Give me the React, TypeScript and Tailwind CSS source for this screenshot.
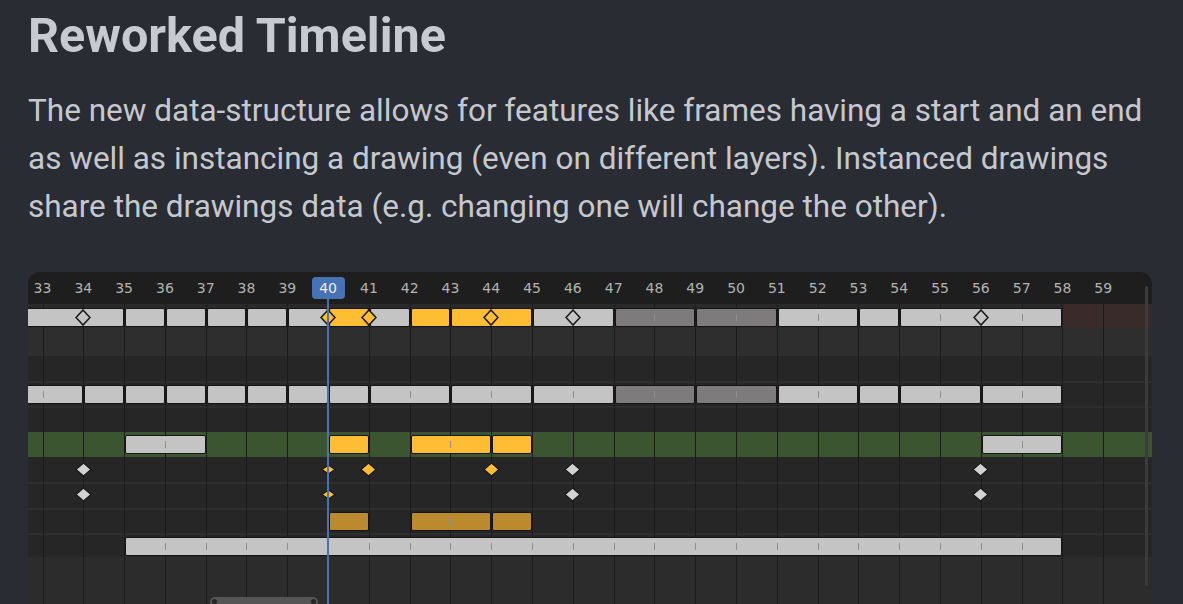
import React from 'react';

// Timeline columns: a 14.5px lead-in up to frame 33, then one 40.8px column per frame.
// Grid line n sits on frame n + 31, so bars and keys are placed by the frame numbers they hold.
const COLS = 'grid grid-cols-[14.5px_repeat(26,40.8px)_1fr]';
const line = (f: number) => f - 31;
const frames = Array.from({ length: 27 }, (_, i) => 33 + i);

type Tone = 'gray' | 'dim' | 'yellow' | 'amber';
type Bar = { a: number; b: number; tone: Tone };
type Key = { f: number; tone: 'gray' | 'yellow'; small?: boolean };

const toneClass: Record<Tone, string> = {
  gray: 'bg-[#c4c4c4]',
  dim: 'bg-[#7d7b7b]',
  yellow: 'bg-[#ffbd33]',
  amber: 'bg-[#bb8a2e]',
};

interface Channel {
  box: string;
  shift?: string;
  bars?: Bar[];
  ticks?: number[];
  outlined?: Key[];
  keys?: Key[];
  redFrom?: number;
}

const g = (a: number, b: number): Bar => ({ a, b, tone: 'gray' });
const y = (a: number, b: number): Bar => ({ a, b, tone: 'yellow' });

const channels: Channel[] = [
  {
    box: 'h-[24px] bg-[#2a2a2a]',
    shift: 'mt-[3px]',
    redFrom: 58,
    bars: [
      g(32, 35), g(35, 36), g(36, 37), g(37, 38), g(38, 39), g(39, 40),
      y(40, 41), g(41, 42), y(42, 43), y(43, 45), g(45, 47),
      { a: 47, b: 49, tone: 'dim' }, { a: 49, b: 51, tone: 'dim' },
      g(51, 53), g(53, 54), g(54, 58),
    ],
    ticks: [48, 50, 52, 55, 57],
    outlined: [
      { f: 34, tone: 'gray' }, { f: 40, tone: 'yellow' }, { f: 41, tone: 'yellow' },
      { f: 44, tone: 'yellow' }, { f: 46, tone: 'gray' }, { f: 56, tone: 'gray' },
    ],
  },
  { box: 'h-[28px] bg-[#2e2e2e]' },
  { box: 'h-[25px] bg-[#262626]' },
  {
    box: 'h-[25px] bg-[#262626] border-t-2 border-[#2f2f2f]',
    bars: [
      g(32, 34), g(34, 35), g(35, 36), g(36, 37), g(37, 38), g(38, 39), g(39, 40), g(40, 41),
      g(41, 43), g(43, 45), g(45, 47),
      { a: 47, b: 49, tone: 'dim' }, { a: 49, b: 51, tone: 'dim' },
      g(51, 53), g(53, 54), g(54, 56), g(56, 58),
    ],
    ticks: [33, 42, 44, 46, 48, 50, 52, 55, 57],
  },
  { box: 'h-[26px] bg-[#262626] border-t-2 border-[#2d2d2d]' },
  {
    box: 'h-[25px] bg-[#3b5531]',
    bars: [g(35, 37), y(40, 41), y(42, 44), y(44, 45), g(56, 58)],
    ticks: [36, 43, 57],
  },
  {
    box: 'h-[25px] bg-[#262626]',
    keys: [
      { f: 34, tone: 'gray' }, { f: 40, tone: 'yellow', small: true }, { f: 41, tone: 'yellow' },
      { f: 44, tone: 'yellow' }, { f: 46, tone: 'gray' }, { f: 56, tone: 'gray' },
    ],
  },
  {
    box: 'h-[26px] bg-[#262626] border-t-2 border-[#2f2f2f]',
    shift: 'mb-[3px]',
    keys: [
      { f: 34, tone: 'gray' }, { f: 40, tone: 'yellow', small: true },
      { f: 46, tone: 'gray' }, { f: 56, tone: 'gray' },
    ],
  },
  {
    box: 'h-[25px] bg-[#262626] border-t-2 border-[#2f2f2f]',
    bars: [
      { a: 40, b: 41, tone: 'amber' }, { a: 42, b: 44, tone: 'amber' }, { a: 44, b: 45, tone: 'amber' },
    ],
    ticks: [43],
  },
  {
    box: 'h-[24px] bg-[#262626] border-t-2 border-[#2f2f2f]',
    bars: [g(35, 58)],
    ticks: Array.from({ length: 22 }, (_, i) => 36 + i),
  },
];

function Diamond({ f, fill, size, stroke, shift = '' }: { f: number; fill: string; size: 'big' | 'key' | 'small'; stroke: number; shift?: string }) {
  const [w, h, cls] =
    size === 'big' ? [16, 17, '-ml-[8px]'] : size === 'key' ? [17, 15, '-ml-[8.5px]'] : [15, 11, '-ml-[7.5px]'];
  return (
    <svg
      className={`relative z-30 row-start-1 self-center justify-self-start ${cls} ${shift}`}
      width={w}
      height={h}
      viewBox={`0 0 ${w} ${h}`}
      style={{ gridColumn: line(f) }}
    >
      <polygon
        points={`${w / 2},1 ${w - 1},${h / 2} ${w / 2},${h - 1} 1,${h / 2}`}
        fill={fill}
        stroke="#1a1a1a"
        strokeWidth={stroke}
      />
    </svg>
  );
}

function ChannelRow({ ch }: { ch: Channel }) {
  const shift = ch.shift ?? '';
  return (
    <div className={`${COLS} items-center ${ch.box}`}>
      {ch.redFrom && (
        <div className="row-start-1 self-stretch bg-[#3a2b2b]" style={{ gridColumn: `${line(ch.redFrom)} / -1` }} />
      )}
      {ch.bars?.map((bar, i) => (
        <div
          key={i}
          className={`relative z-20 row-start-1 h-[19px] rounded-[2px] border border-[#151515] ${
            bar.a < 33 ? '-ml-[4px]' : 'ml-px'
          } ${toneClass[bar.tone]} ${shift}`}
          style={{ gridColumn: `${line(bar.a)} / ${line(bar.b)}` }}
        />
      ))}
      {ch.ticks?.map((t) => (
        <span
          key={t}
          className={`relative z-20 row-start-1 h-[7px] w-px justify-self-start bg-[#8e8e8e] ${shift}`}
          style={{ gridColumn: line(t) }}
        />
      ))}
      {ch.outlined?.map((k) => (
        <Diamond key={k.f} f={k.f} fill={k.tone === 'gray' ? '#c4c4c4' : '#ffbd33'} size="big" stroke={1.6} shift={shift} />
      ))}
      {ch.keys?.map((k) => (
        <Diamond
          key={k.f}
          f={k.f}
          fill={k.tone === 'gray' ? '#d2d2d2' : '#ffbd33'}
          size={k.small ? 'small' : 'key'}
          stroke={1.3}
          shift={shift}
        />
      ))}
    </div>
  );
}

function Timeline() {
  return (
    <div className="relative mx-[28px] mt-[41px] h-[340px] w-[1124px] overflow-hidden rounded-t-[12px] bg-[#2c2c2c] font-['DejaVu_Sans',sans-serif]">
      {/* frame ruler */}
      <div className="h-[32px] bg-[#1e1e1e]">
        <div className="ml-[-5.9px] grid h-full grid-cols-[repeat(27,40.8px)] items-center">
          {frames.map((f) => (
            <div key={f} className="flex justify-center">
              {f === 40 ? (
                <span className="relative z-40 h-[22px] w-[33px] rounded-[4px] bg-[#4772b3] text-center text-[14px] leading-[22px] text-[#ececec]">
                  40
                </span>
              ) : (
                <span className="text-[14px] leading-[18px] text-[#b3b3b3]">{f}</span>
              )}
            </div>
          ))}
        </div>
      </div>

      {/* channels */}
      <div className="flex flex-col">
        {channels.map((ch, i) => (
          <ChannelRow key={i} ch={ch} />
        ))}
      </div>

      {/* frame grid lines, over the channel backgrounds */}
      <div className={`pointer-events-none absolute inset-x-0 top-[32px] bottom-0 z-10 ${COLS}`}>
        {Array.from({ length: 28 }, (_, i) => (
          <div key={i} className={i === 0 ? '' : 'border-l border-[#1b1b1b]'} />
        ))}
      </div>

      {/* scrollbars */}
      <div className="absolute right-[4px] top-[14px] z-30 h-[300px] w-[3px] rounded-full bg-[#3b3b3b]" />
      <div className="absolute left-[182px] top-[325px] z-30 flex h-[14px] w-[108px] items-start justify-between rounded-[5px] bg-[#555555] px-[2px] pt-[2px]">
        <span className="h-[5px] w-[5px] rounded-full bg-[#262626]" />
        <span className="h-[5px] w-[5px] rounded-full bg-[#262626]" />
      </div>

      {/* playhead */}
      <div className="absolute top-[27px] bottom-0 left-[298.6px] z-40 w-[2px] bg-[#4772b3]" />
    </div>
  );
}

export default function App() {
  return (
    <div className="h-[604px] w-[1183px] overflow-hidden bg-[#292c33] font-['Roboto',sans-serif]">
      <h1 className="px-[28px] pt-[8px] text-[48.5px] font-bold leading-[56px] text-[#c8cad1]">Reworked Timeline</h1>
      <p className="mt-[23px] px-[28px] text-[31.5px] leading-[48px] text-[#c5c8cf]">
        The new data-structure allows for features like frames having a start and an end as well as instancing a
        drawing (even on different layers). Instanced drawings share the drawings data (e.g. changing one will
        change the other).
      </p>
      <Timeline />
    </div>
  );
}
